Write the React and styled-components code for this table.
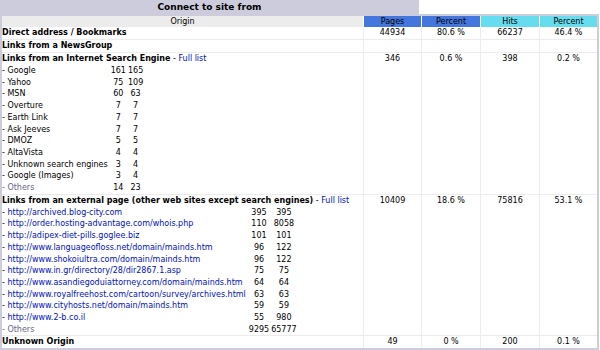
import styled, { createGlobalStyle } from "styled-components";

/* ---------- DATA ---------- */

const engines = [
  ["Google", 161, 165],
  ["Yahoo", 75, 109],
  ["MSN", 60, 63],
  ["Overture", 7, 7],
  ["Earth Link", 7, 7],
  ["Ask Jeeves", 7, 7],
  ["DMOZ", 5, 5],
  ["AltaVista", 4, 4],
  ["Unknown search engines", 3, 4],
  ["Google (Images)", 3, 4],
];

const pages = [
  ["http://archived.blog-city.com", 395, 395],
  ["http://order.hosting-advantage.com/whois.php", 110, 8058],
  ["http://adipex-diet-pills.goglee.biz", 101, 101],
  ["http://www.languageofloss.net/domain/mainds.htm", 96, 122],
  ["http://www.shokoiultra.com/domain/mainds.htm", 96, 122],
  ["http://www.in.gr/directory/28/dir2867.1.asp", 75, 75],
  ["http://www.asandiegoduiattorney.com/domain/mainds.htm", 64, 64],
  ["http://www.royalfreehost.com/cartoon/survey/archives.html", 63, 63],
  ["http://www.cityhosts.net/domain/mainds.htm", 59, 59],
  ["http://www.2-b.co.il", 55, 980],
];

/* ---------- STYLES ---------- */

const GlobalStyle = createGlobalStyle`
  body {
    margin: 0;
    background: #ffffff;
    font-family: "DejaVu Sans", Verdana, sans-serif;
    color: #000000;
  }
`;

const COLS = "361px 58px 59px 59px 58px";

const Page = styled.div`
  width: 600px;
  font-size: 8px;
`;

const TitleBar = styled.div`
  width: 419px;
  height: 14px;
  line-height: 14px;
  background: #ccccdd;
  font-size: 9px;
  font-weight: bold;
  text-align: center;
`;

const DataBox = styled.div`
  width: 599px;
  box-sizing: border-box;
  border: 2px solid #ccccdd;
  background: #ffffff;
`;

const HeadRow = styled.div`
  display: grid;
  grid-template-columns: ${COLS};
  height: 11px;
  line-height: 11px;
`;

const HeadCell = styled.div`
  background: ${({ $bg }) => $bg};
  text-align: center;
  border-left: ${({ $first }) => ($first ? "none" : "1px solid #ffffff")};
`;

const Row = styled.div`
  display: grid;
  grid-template-columns: ${COLS};
  border-bottom: ${({ $last }) => ($last ? "none" : "1px solid #ececec")};
`;

const OriginCell = styled.div`
  text-align: left;
`;

const ValueCell = styled.div`
  border-left: 1px solid #ececec;
  text-align: center;
  line-height: 12px;
`;

const SectionTitle = styled.div`
  line-height: 12px;
  white-space: nowrap;
  b {
    font-weight: bold;
  }
`;

const Link = styled.a`
  color: #0011bb;
  text-decoration: none;
`;

const SubList = styled.div`
  display: grid;
  grid-template-columns: max-content max-content max-content;
  justify-content: start;
  line-height: 11.7px;
`;

const SubName = styled.div`
  white-space: nowrap;
  padding-right: 2px;
  color: ${({ $muted }) => ($muted ? "#666688" : "#000000")};
`;

const SubNum = styled.div`
  padding: 0 1px;
  text-align: center;
`;

/* ---------- PARTS ---------- */

function Values({ v }) {
  return v.map((x, i) => <ValueCell key={i}>{x}</ValueCell>);
}

function SubRows({ items, others, links }) {
  return (
    <SubList>
      {items.map(([name, a, b]) => [
        <SubName key={name + "n"}>
          - {links ? <Link href="#">{name}</Link> : name}
        </SubName>,
        <SubNum key={name + "a"}>{a}</SubNum>,
        <SubNum key={name + "b"}>{b}</SubNum>,
      ])}
      <SubName $muted>- Others</SubName>
      <SubNum>{others[0]}</SubNum>
      <SubNum>{others[1]}</SubNum>
    </SubList>
  );
}

/* ---------- COMPONENT ---------- */

export default function App() {
  return (
    <Page>
      <GlobalStyle />
      <TitleBar>Connect to site from</TitleBar>
      <DataBox>
        <HeadRow>
          <HeadCell $first $bg="#ececec">Origin</HeadCell>
          <HeadCell $bg="#4477dd">Pages</HeadCell>
          <HeadCell $bg="#4477dd">Percent</HeadCell>
          <HeadCell $bg="#66ddee">Hits</HeadCell>
          <HeadCell $bg="#66ddee">Percent</HeadCell>
        </HeadRow>

        <Row>
          <OriginCell>
            <SectionTitle><b>Direct address / Bookmarks</b></SectionTitle>
          </OriginCell>
          <Values v={["44934", "80.6 %", "66237", "46.4 %"]} />
        </Row>

        <Row>
          <OriginCell>
            <SectionTitle><b>Links from a NewsGroup</b></SectionTitle>
          </OriginCell>
          <Values v={["", "", "", ""]} />
        </Row>

        <Row>
          <OriginCell>
            <SectionTitle>
              <b>Links from an Internet Search Engine</b> - <Link href="#">Full list</Link>
            </SectionTitle>
            <SubRows items={engines} others={[14, 23]} />
          </OriginCell>
          <Values v={["346", "0.6 %", "398", "0.2 %"]} />
        </Row>

        <Row>
          <OriginCell>
            <SectionTitle>
              <b>Links from an external page (other web sites except search engines)</b> -{" "}
              <Link href="#">Full list</Link>
            </SectionTitle>
            <SubRows items={pages} others={[9295, 65777]} links />
          </OriginCell>
          <Values v={["10409", "18.6 %", "75816", "53.1 %"]} />
        </Row>

        <Row $last>
          <OriginCell>
            <SectionTitle><b>Unknown Origin</b></SectionTitle>
          </OriginCell>
          <Values v={["49", "0 %", "200", "0.1 %"]} />
        </Row>
      </DataBox>
    </Page>
  );
}
